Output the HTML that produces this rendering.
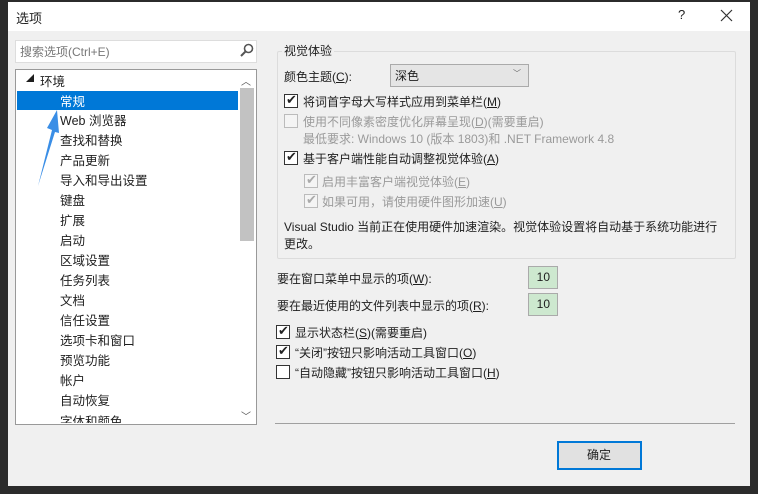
<!DOCTYPE html>
<html><head><meta charset="utf-8"><style>
body{margin:0;width:758px;height:494px;background:#2b2b2b;position:relative;overflow:hidden;font-family:"Liberation Sans","Noto Sans CJK SC",sans-serif;font-size:12px;color:#1e1e1e}
.a{position:absolute;white-space:nowrap}
.cb{position:absolute;width:12px;height:12px;border:1px solid #333;background:#fff}
.cb.g{border-color:#bbb;background:#f4f4f4}
.ck{position:absolute;left:1px;top:-3px;font-size:13px;color:#222}
.g .ck{color:#aaa}
.gr{color:#9a9a9a}
</style></head><body>
<div class="a" style="left:8px;top:2px;width:742px;height:484px;background:#f0f0f0"></div>
<div class="a" style="left:8px;top:2px;width:742px;height:29px;background:#fff"></div>
<div class="a" style="left:16px;top:8px;font-size:13px">选项</div>
<div class="a" style="left:678px;top:7px;font-size:13px">?</div>
<svg class="a" style="left:720px;top:9px" width="13" height="13"><path d="M1 1L12 12M12 1L1 12" stroke="#333" stroke-width="1.2"/></svg>
<!-- search -->
<div class="a" style="left:15px;top:40px;width:240px;height:21px;background:#fff;border:1px solid #ddd"></div>
<div class="a gr" style="left:20px;top:43px;color:#777">搜索选项(Ctrl+E)</div>
<svg class="a" style="left:240px;top:43px" width="14" height="14"><circle cx="8.5" cy="5.5" r="4" fill="none" stroke="#555" stroke-width="1.6"/><line x1="5.5" y1="8.5" x2="1" y2="13" stroke="#555" stroke-width="2"/></svg>
<!-- tree -->
<div class="a" style="left:15px;top:69px;width:240px;height:354px;background:#fff;border:1px solid #999"></div>
<div class="a" style="left:240px;top:88px;width:14px;height:153px;background:#c2c2c2"></div>
<div class="a" style="left:241px;top:73px;font-size:10px;color:#555">︿</div>
<div class="a" style="left:241px;top:408px;font-size:10px;color:#555">﹀</div>
<div class="a" style="left:17px;top:91px;width:221px;height:19px;background:#0078d7"></div>
<div class="a" style="left:26px;top:73px;font-size:8px">◢</div>
<div class="a" style="left:40px;top:71px;font-size:12.5px">环境</div>
<div class="a" style="left:60px;top:91px;color:#fff;font-size:12.5px">常规</div>
<div class="a" style="left:60px;top:111px;line-height:20px;font-size:12.5px">Web 浏览器<br>查找和替换<br>产品更新<br>导入和导出设置<br>键盘<br>扩展<br>启动<br>区域设置<br>任务列表<br>文档<br>信任设置<br>选项卡和窗口<br>预览功能<br>帐户<br>自动恢复</div>
<div class="a" style="left:60px;top:411px;height:12px;overflow:hidden;font-size:12.5px">字体和颜色</div>
<svg class="a" style="left:30px;top:100px" width="40" height="90"><path d="M8 86 L22 30 L17 28 L27 10 L29 33 L25 32 Z" fill="#3a8ee6"/></svg>
<!-- group -->
<div class="a" style="left:277px;top:51px;width:457px;height:206px;border:1px solid #dcdcdc;border-radius:2px"></div>
<div class="a" style="left:282px;top:42px;background:#f0f0f0;padding:0 2px">视觉体验</div>
<div class="a" style="left:284px;top:68px">颜色主题(<u>C</u>):</div>
<div class="a" style="left:390px;top:64px;width:137px;height:21px;background:#e5e5e5;border:1px solid #aaa"></div>
<div class="a" style="left:395px;top:67px">深色</div>
<div class="a" style="left:513px;top:68px;font-size:8px;color:#666">﹀</div>
<div class="cb" style="left:284px;top:94px"><span class="ck">✔</span></div>
<div class="a" style="left:303px;top:93px">将词首字母大写样式应用到菜单栏(<u>M</u>)</div>
<div class="cb g" style="left:284px;top:114px"></div>
<div class="a gr" style="left:303px;top:113px">使用不同像素密度优化屏幕呈现(<u>D</u>)(需要重启)</div>
<div class="a gr" style="left:303px;top:130px">最低要求: Windows 10 (版本 1803)和 .NET Framework 4.8</div>
<div class="cb" style="left:284px;top:151px"><span class="ck">✔</span></div>
<div class="a" style="left:303px;top:150px">基于客户端性能自动调整视觉体验(<u>A</u>)</div>
<div class="cb g" style="left:304px;top:174px"><span class="ck">✔</span></div>
<div class="a gr" style="left:322px;top:173px">启用丰富客户端视觉体验(<u>E</u>)</div>
<div class="cb g" style="left:304px;top:194px"><span class="ck">✔</span></div>
<div class="a gr" style="left:322px;top:193px">如果可用，请使用硬件图形加速(<u>U</u>)</div>
<div class="a" style="left:284px;top:219px;line-height:17px">Visual Studio 当前正在使用硬件加速渲染。视觉体验设置将自动基于系统功能进行<br>更改。</div>
<!-- lower -->
<div class="a" style="left:277px;top:270px">要在窗口菜单中显示的项(<u>W</u>):</div>
<div class="a" style="left:528px;top:266px;width:28px;height:21px;background:#cde8cf;border:1px solid #aaa;text-align:right"><span style="position:relative;top:3px;right:7px">10</span></div>
<div class="a" style="left:277px;top:297px">要在最近使用的文件列表中显示的项(<u>R</u>):</div>
<div class="a" style="left:528px;top:293px;width:28px;height:21px;background:#cde8cf;border:1px solid #aaa;text-align:right"><span style="position:relative;top:3px;right:7px">10</span></div>
<div class="cb" style="left:276px;top:325px"><span class="ck">✔</span></div>
<div class="a" style="left:295px;top:324px">显示状态栏(<u>S</u>)(需要重启)</div>
<div class="cb" style="left:276px;top:345px"><span class="ck">✔</span></div>
<div class="a" style="left:295px;top:344px">“关闭”按钮只影响活动工具窗口(<u>O</u>)</div>
<div class="cb" style="left:276px;top:365px"></div>
<div class="a" style="left:295px;top:364px">“自动隐藏”按钮只影响活动工具窗口(<u>H</u>)</div>
<div class="a" style="left:275px;top:423px;width:460px;height:1px;background:#a0a0a0"></div>
<div class="a" style="left:557px;top:441px;width:81px;height:25px;background:#e1e1e1;border:2px solid #0078d7"></div>
<div class="a" style="left:587px;top:446px">确定</div>
</body></html>
